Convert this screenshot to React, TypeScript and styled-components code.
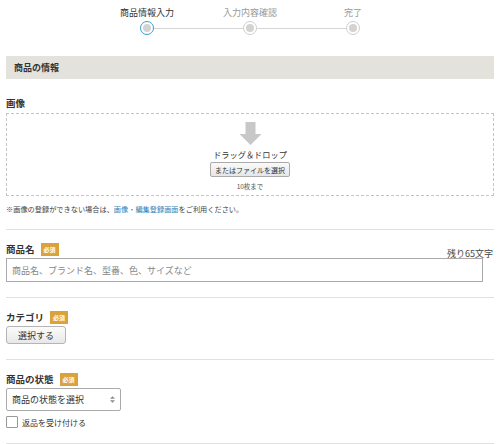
import React from 'react';
import styled, { createGlobalStyle } from 'styled-components';

const GlobalStyle = createGlobalStyle`
	body {
		margin: 0;
		background: #fff;
		font-family: 'Noto Sans CJK JP', 'Noto Sans', sans-serif;
		color: #333;
	}
`;

const steps = ['商品情報入力', '入力内容確認', '完了'];

export default function App() {
	return (
		<Page>
			<GlobalStyle />
			<Stepper>
				<StepLabels>
					{steps.map((s, i) => (
						<StepLabel key={s} $active={i === 0}>
							{s}
						</StepLabel>
					))}
				</StepLabels>
				<StepTrack>
					<StepDot $active />
					<StepLine />
					<StepDot />
					<StepLine />
					<StepDot />
				</StepTrack>
			</Stepper>

			<SectionHeader>商品の情報</SectionHeader>

			<Field $first>
				<Label>画像</Label>
				<DropZone>
					<Arrow viewBox='0 0 24 24'>
						<path d='M7 0h10v12h6l-11 11L1 12h6z' fill='#c8c8c8' />
					</Arrow>
					<DropText>ドラッグ＆ドロップ</DropText>
					<SmallButton>またはファイルを選択</SmallButton>
					<Limit>10枚まで</Limit>
				</DropZone>
				<Note>
					※画像の登録ができない場合は、<NoteLink>画像・編集登録画面</NoteLink>をご利用ください。
				</Note>
			</Field>

			<Divider />

			<Field>
				<LabelRow>
					<Label>商品名</Label>
					<Required>必須</Required>
					<Counter>残り65文字</Counter>
				</LabelRow>
				<TextInput placeholder='商品名、ブランド名、型番、色、サイズなど' />
			</Field>

			<Divider />

			<Field>
				<LabelRow>
					<Label>カテゴリ</Label>
					<Required>必須</Required>
				</LabelRow>
				<SelectButton>選択する</SelectButton>
			</Field>

			<Divider />

			<Field>
				<LabelRow>
					<Label>商品の状態</Label>
					<Required>必須</Required>
				</LabelRow>
				<SelectBox>
					<span>商品の状態を選択</span>
					<Chevrons viewBox='0 0 6 10'>
						<path d='M0 4L3 1l3 3zM0 6l3 3 3-3z' fill='#8a8a8a' />
					</Chevrons>
				</SelectBox>
				<CheckRow>
					<CheckBox />
					返品を受け付ける
				</CheckRow>
			</Field>

			<Divider />
		</Page>
	);
}

const Page = styled.div`
	width: 500px;
	height: 444px;
	overflow: hidden;
	box-sizing: border-box;
	padding: 0 6px;
`;

const Stepper = styled.div`
	display: flex;
	flex-direction: column;
	align-items: center;
	padding-top: 6px;
	height: 56px;
	box-sizing: border-box;
`;

const StepLabels = styled.div`
	display: grid;
	grid-template-columns: repeat(3, 103px);
`;

const StepLabel = styled.div<{ $active?: boolean }>`
	text-align: center;
	font-size: 9px;
	line-height: 13px;
	color: ${(p) => (p.$active ? '#333' : '#999')};
`;

const StepTrack = styled.div`
	display: flex;
	align-items: center;
	margin-top: 2px;
`;

const StepDot = styled.div<{ $active?: boolean }>`
	width: 14px;
	height: 14px;
	box-sizing: border-box;
	border-radius: 50%;
	border: 1.5px solid ${(p) => (p.$active ? '#3b9fc9' : '#cfcfcf')};
	background: #fff;
	display: flex;
	align-items: center;
	justify-content: center;

	&::after {
		content: '';
		width: 8px;
		height: 8px;
		border-radius: 50%;
		background: #d3d3d3;
	}
`;

const StepLine = styled.div`
	width: 89px;
	height: 1px;
	background: #d6d6d6;
`;

const SectionHeader = styled.div`
	background: #e4e2dd;
	height: 23px;
	line-height: 23px;
	padding-left: 8px;
	font-size: 9px;
	font-weight: 700;
	color: #333;
`;

const Field = styled.div<{ $first?: boolean }>`
	padding-top: ${(p) => (p.$first ? '17px' : '12px')};
`;

const Label = styled.div`
	font-size: 9.5px;
	font-weight: 700;
	color: #333;
	line-height: 14px;
`;

const LabelRow = styled.div`
	display: flex;
	align-items: center;
	gap: 6px;
	padding-right: 1px;
`;

const Required = styled.span`
	background: #dca23a;
	color: #fff;
	font-size: 6px;
	font-weight: 700;
	padding: 2px 3px;
	line-height: 9px;
`;

const Counter = styled.span`
	margin-left: auto;
	font-size: 9px;
	color: #444;
	align-self: flex-end;
	margin-bottom: -4px;
`;

const DropZone = styled.div`
	margin-top: 3px;
	height: 83px;
	box-sizing: border-box;
	border: 1px dashed #c4c4c4;
	display: flex;
	flex-direction: column;
	align-items: center;
	padding-top: 8px;
`;

const Arrow = styled.svg`
	width: 25px;
	height: 24px;
`;

const DropText = styled.div`
	font-size: 8.2px;
	color: #333;
	margin-top: 2px;
`;

const SmallButton = styled.button`
	margin-top: 2px;
	font-family: inherit;
	font-size: 7px;
	color: #333;
	padding: 0 4px;
	height: 15px;
	border: 1px solid #aaa;
	border-radius: 2px;
	background: linear-gradient(#fafafa, #e6e6e6);
`;

const Limit = styled.div`
	font-size: 6.5px;
	color: #555;
	margin-top: 4px;
`;

const Note = styled.div`
	margin-top: 8px;
	font-size: 7.2px;
	color: #444;
`;

const NoteLink = styled.span`
	color: #2f7fb5;
`;

const Divider = styled.div`
	height: 1px;
	background: #e0e0e0;
	margin-top: 15px;
`;

const TextInput = styled.input`
	display: block;
	margin-top: 2px;
	width: 477px;
	height: 24px;
	box-sizing: border-box;
	border: 1px solid #aaa;
	padding: 0 5px;
	font-family: inherit;
	font-size: 9px;
	color: #333;
	outline: none;

	&::placeholder {
		color: #888;
	}
`;

const SelectButton = styled.button`
	display: block;
	margin-top: 2px;
	width: 60px;
	height: 18px;
	font-family: inherit;
	font-size: 9px;
	color: #333;
	border: 1px solid #b5b5b5;
	border-radius: 3px;
	background: linear-gradient(#fbfbfb, #e8e8e8);
`;

const SelectBox = styled.div`
	margin-top: 2px;
	width: 115px;
	height: 23px;
	box-sizing: border-box;
	border: 1px solid #aaa;
	border-radius: 2px;
	display: flex;
	align-items: center;
	justify-content: space-between;
	padding: 0 5px;
	font-size: 9px;
	color: #333;
`;

const Chevrons = styled.svg`
	width: 5px;
	height: 9px;
`;

const CheckRow = styled.label`
	display: flex;
	align-items: center;
	gap: 4px;
	margin-top: 5px;
	font-size: 8px;
	color: #333;
`;

const CheckBox = styled.span`
	width: 10px;
	height: 10px;
	border: 1px solid #999;
	border-radius: 1px;
	background: #fff;
`;
